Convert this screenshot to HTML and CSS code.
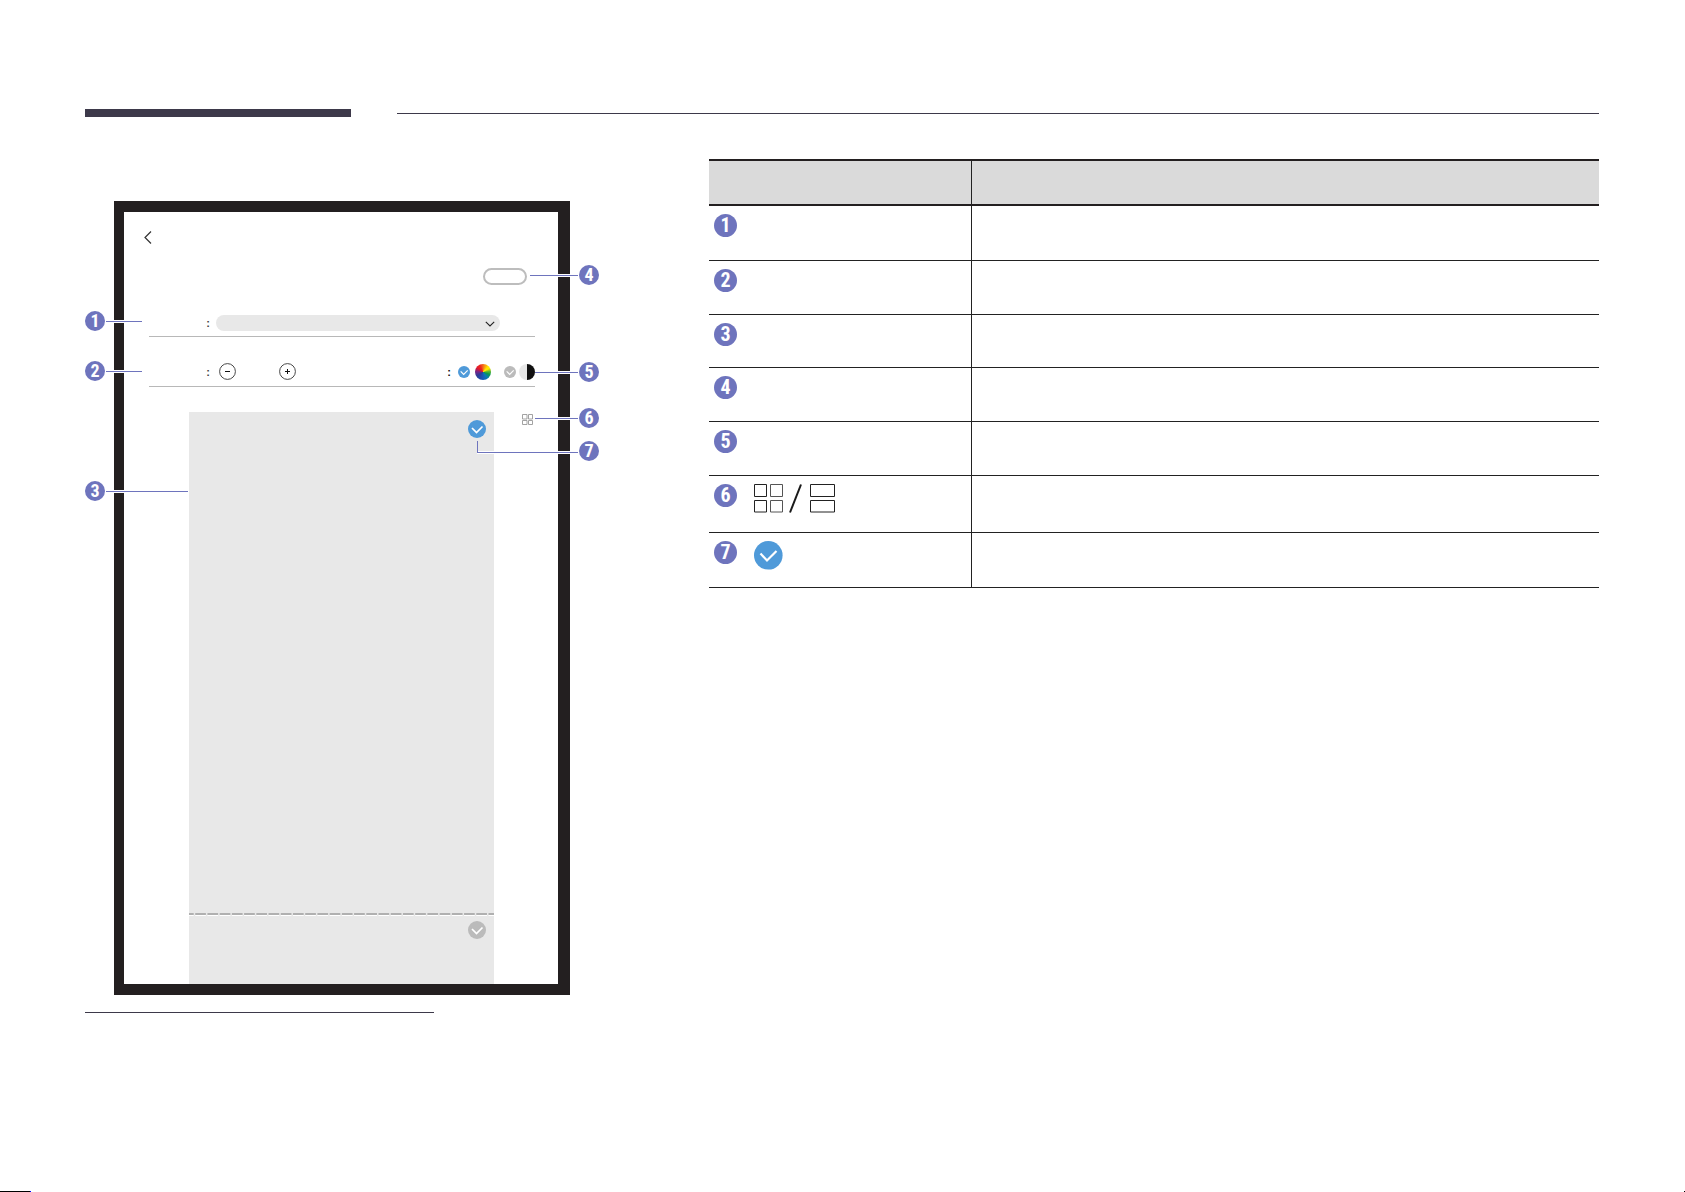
FILE: index.html
```html
<!DOCTYPE html>
<html lang="en">
<head>
<meta charset="utf-8">
<title>Manual page</title>
<link rel="stylesheet" href="styles.css">
</head>
<body>
<header class="page-head">
  <span class="head-bar"></span>
  <span class="head-line"></span>
</header>
<main class="content">
  <section class="left">
    <div class="figure">
      <div class="device">
        <button class="back" type="button" aria-label="Back"><svg width="8" height="13" viewBox="0 0 8 13"><path d="M7 .5 1 6.500 7 12.500" fill="none" stroke="#333" stroke-width="1.200"/></svg></button>
        <div class="actions"><button class="pill" type="button" aria-label="Action"></button></div>
        <div class="option">
          <label class="option-label" for="source">:</label>
          <span class="picker">
            <select id="source"><option></option></select>
            <svg class="picker-arrow" width="10" height="6" viewBox="0 0 10 6"><path d="M.8.8 5 5 9.200.8" fill="none" stroke="#222" stroke-width="1.100"/></svg>
          </span>
        </div>
        <div class="option option-two">
          <span class="option-label">:</span>
          <span class="stepper">
            <button class="round" type="button" aria-label="Less"><svg width="17" height="17" viewBox="0 0 17 17"><circle cx="8.500" cy="8.500" r="7.900" fill="none" stroke="#333" stroke-width=".9"/><path d="M6 8.500h5" stroke="#111" stroke-width="1"/></svg></button>
            <button class="round" type="button" aria-label="More"><svg width="17" height="17" viewBox="0 0 17 17"><circle cx="8.500" cy="8.500" r="7.900" fill="none" stroke="#333" stroke-width=".9"/><path d="M6 8.500h5M8.500 6v5" stroke="#111" stroke-width="1"/></svg></button>
          </span>
          <span class="modes">
            <span class="mode-colon">:</span>
            <label class="mode"><input class="tick tick-small" type="radio" name="mode" aria-label="Color" checked><span class="swatch wheel"></span></label>
            <label class="mode"><input class="tick tick-small" type="radio" name="mode" aria-label="Mono"><span class="swatch mono"></span></label>
          </span>
        </div>
        <div class="pages">
          <div class="sheets">
            <div class="sheet sheet-first"><input class="tick" type="checkbox" aria-label="First page" checked></div>
            <svg class="cut" width="100%" height="3"><path d="M-6 1H400" stroke="#b0b0b0" stroke-width="2" stroke-dasharray="10.700 1.520"/><path d="M-6 2.500H400" stroke="#fff" stroke-dasharray="10.700 1.520"/></svg>
            <div class="sheet"><input class="tick" type="checkbox" aria-label="Second page"></div>
          </div>
          <button class="view" type="button" aria-label="View"><svg width="11" height="11" viewBox="0 0 11 11"><path d="M.5.5h4.500v4.500h-4.500zM6.500.5h4v4.500h-4zM.5 6.500h4.500v4h-4.500zM6.500 6.500h4v4h-4z" fill="none" stroke="#999" stroke-width=".9"/></svg></button>
        </div>
      </div>
      <div class="callout at-1"><span class="badge">1</span><i class="lead lead-short"></i></div>
      <div class="callout at-2"><span class="badge">2</span><i class="lead lead-short"></i></div>
      <div class="callout at-3"><span class="badge">3</span><i class="lead lead-long"></i></div>
      <div class="callout right at-4"><i class="lead lead-4"></i><span class="badge">4</span></div>
      <div class="callout right at-5"><i class="lead"></i><span class="badge">5</span></div>
      <div class="callout right at-6"><i class="lead"></i><span class="badge">6</span></div>
      <div class="callout right at-7"><i class="lead lead-7"></i><span class="badge">7</span></div>
    </div>
    <hr class="note-line">
  </section>
  <table class="parts">
    <thead><tr><th class="name"></th><th></th></tr></thead>
    <tbody>
      <tr class="first"><td><div class="cell"><span class="badge badge-big">1</span></div></td><td></td></tr>
      <tr><td><div class="cell"><span class="badge badge-big">2</span></div></td><td></td></tr>
      <tr class="short"><td><div class="cell"><span class="badge badge-big">3</span></div></td><td></td></tr>
      <tr><td><div class="cell"><span class="badge badge-big">4</span></div></td><td></td></tr>
      <tr><td><div class="cell"><span class="badge badge-big">5</span></div></td><td></td></tr>
      <tr class="tall"><td><div class="cell"><span class="badge badge-big">6</span>
        <svg width="82" height="30" viewBox="0 0 82 30"><g fill="none" stroke="#222" stroke-width="1"><path d="M.5.5h12v12H.5zM.5 16.500h12v11.500H.5z"/><path d="M16.500.5h12v12h-12zM16.500 16.500h12v11.500h-12z" stroke="#555"/><path d="M56.500.5h24v12h-24zM56.500 16.500h24v11.500h-24z"/></g><path d="M36 28.500 47 .5" stroke="#1a1a1a" stroke-width="2"/></svg></div></td><td></td></tr>
      <tr class="last"><td><div class="cell"><span class="badge badge-big">7</span>
        <svg width="29" height="29" viewBox="0 0 29 29"><circle cx="14.300" cy="14.300" r="14.300" fill="#4f9ad9"/><path d="m6.500 12.500 6.500 7 9.500-9.500" fill="none" stroke="#fff" stroke-width="2.200"/></svg></div></td><td></td></tr>
    </tbody>
  </table>
</main>
<footer class="page-foot"><span class="foot-mark"></span><span class="foot-dot"></span></footer>
</body>
</html>
```
FILE: styles.css
```css
* { box-sizing: border-box; }

body {
  margin: 0;
  min-height: 100vh;
  display: flex;
  flex-direction: column;
  background: #fff;
  color: #222;
  font-family: "Liberation Sans", Arial, sans-serif;
}

button {
  padding: 0;
  border: 0;
  background: none;
}

svg { display: block; }

.page-head {
  display: flex;
  align-items: center;
  gap: 46px;
  padding: 109px 86px 0 85px;
}
.head-bar { width: 266px; height: 8px; background: #3d394a; }
.head-line { flex: 1; height: 1px; background: #3d394a; }

.content {
  flex: 1;
  display: flex;
  align-items: flex-start;
  gap: 109px;
  padding: 42px 86px 0 85px;
}
.left { flex: none; width: 515px; padding-top: 42px; }
.figure { position: relative; padding: 0 30px 0 29px; }
.note-line {
  width: 349px;
  height: 1px;
  margin: 17px 0 0;
  border: 0;
  background: #3d394a;
}

/* Device screen */
.device {
  display: flex;
  flex-direction: column;
  border: solid #231f20;
  border-width: 11px 12px 11px 10px;
}
.back { align-self: flex-start; margin: 19px 0 0 20px; }
.actions { display: flex; justify-content: flex-end; padding: 24px 31px 30px 0; }
.pill {
  width: 44px;
  height: 17px;
  border: 2px solid #bdbdbd;
  border-radius: 9px;
}
.option {
  display: flex;
  align-items: center;
  margin: 0 23px 0 25px;
  padding-bottom: 5px;
  border-bottom: 1px solid #b8b8b8;
}
.option-two { padding: 26px 0 6px; }
.option-label {
  width: 67px;
  padding-right: 6px;
  color: #444;
  font-size: 11px;
  font-weight: bold;
  line-height: 12px;
  text-align: right;
}
.picker { position: relative; width: 284px; height: 16px; }
.picker select {
  display: block;
  width: 100%;
  height: 16px;
  border: 0;
  border-radius: 8px;
  background: #e8e8e8;
  appearance: none;
}
.picker-arrow { position: absolute; top: 6px; right: 5px; pointer-events: none; }
.stepper { display: flex; gap: 43px; margin-left: 3px; }
.modes { display: flex; align-items: center; gap: 13px; margin-left: auto; }
.mode-colon { margin-right: -6px; color: #111; font-size: 11px; font-weight: bold; line-height: 12px; }
.mode { display: flex; align-items: center; gap: 5px; }
.mode + .mode { gap: 3px; }
.swatch { width: 16px; height: 16px; border-radius: 50%; }
.wheel {
  background: conic-gradient(#f36b1c, #ffe600 45deg, #ffe600 60deg, #5cb531 85deg, #0b9a4a 110deg, #0878b8 145deg, #1d54b0 190deg, #2b3c98 235deg, #7c2585 275deg, #e0182d 305deg, #ee2a1c 335deg, #f36b1c);
}
.mono { background: linear-gradient(90deg, #e8e8e8 50%, #111 50%); }

.tick {
  width: 18px;
  height: 18px;
  margin: 0;
  border-radius: 50%;
  appearance: none;
  background: #bbb url("data:image/svg+xml,%3Csvg xmlns='http://www.w3.org/2000/svg' viewBox='0 0 18 18'%3E%3Cpath d='m4 8 4.500 4.500 6-6' fill='none' stroke='white' stroke-width='1.700'/%3E%3C/svg%3E");
}
.tick:checked { background-color: #4f9ad9; }
.tick-small { width: 12px; height: 12px; }

.pages { display: flex; align-items: flex-start; gap: 28px; padding: 25px 0 0 65px; }
.sheets { width: 305px; }
.sheet {
  display: flex;
  justify-content: flex-end;
  align-items: flex-start;
  height: 68px;
  padding: 5px 8px;
  background: #e8e8e8;
}
.sheet-first { height: 501px; padding-top: 8px; }
.cut { background: #e8e8e8; }
.view { margin-top: 2px; }

/* Numbered callouts laid over the figure */
.badge {
  flex: none;
  width: 20px;
  height: 20px;
  border-radius: 50%;
  background: #6e74bd;
  color: #fff;
  font: bold 18px/20px "Roboto Condensed", Roboto, "Liberation Sans", sans-serif;
  text-align: center;
}
.badge-big { width: 23px; height: 23px; font-size: 20px; line-height: 23px; }
.callout { position: absolute; left: 0; display: flex; align-items: center; }
.callout.right { left: auto; right: 1px; }
.lead {
  width: 43px;
  height: 3px;
  border: solid #fff;
  border-width: 1px 0;
  background: #6e74bd;
}
.callout .lead { margin: 0 1px; }
.lead-short { width: 36px; }
.lead-long { width: 82px; }
.callout .lead-4 { width: 48px; }
.callout .lead-7 {
  align-self: flex-start;
  width: 101px;
  height: 12px;
  border: solid #6e74bd;
  border-width: 0 0 1px 1px;
  background: linear-gradient(#fff, #fff) bottom / 100% 1px no-repeat;
  box-shadow: 0 1px #fff;
}
.at-1 { top: 110px; }
.at-2 { top: 160px; }
.at-3 { top: 280px; }
.at-4 { top: 64px; }
.at-5 { top: 161px; }
.at-6 { top: 207px; }
.at-7 { top: 240px; }

/* Parts table */
.parts {
  flex: 1;
  border-collapse: separate;
  border-spacing: 0;
  border-top: 2px solid #231f20;
  table-layout: fixed;
}
.parts th { height: 45px; padding: 0; border-bottom: 2px solid #231f20; background: #dadada; }
.parts .name { width: 263px; }
.parts td { height: 54px; padding: 0; border-bottom: 1px solid #222; vertical-align: top; }
.parts th:first-child, .parts td:first-child { border-right: 1px solid #222; }
.parts .first td, .parts .last td { height: 55px; }
.parts .short td { height: 53px; }
.parts .tall td { height: 57px; }
.cell { display: flex; align-items: flex-start; gap: 17px; padding: 8px 5px 0; }

.page-foot { display: flex; justify-content: space-between; }
.foot-mark { width: 31px; height: 1px; background: #000; border-right: 1px solid #00f; }
.foot-dot { width: 1px; height: 1px; background: #000; }
```
